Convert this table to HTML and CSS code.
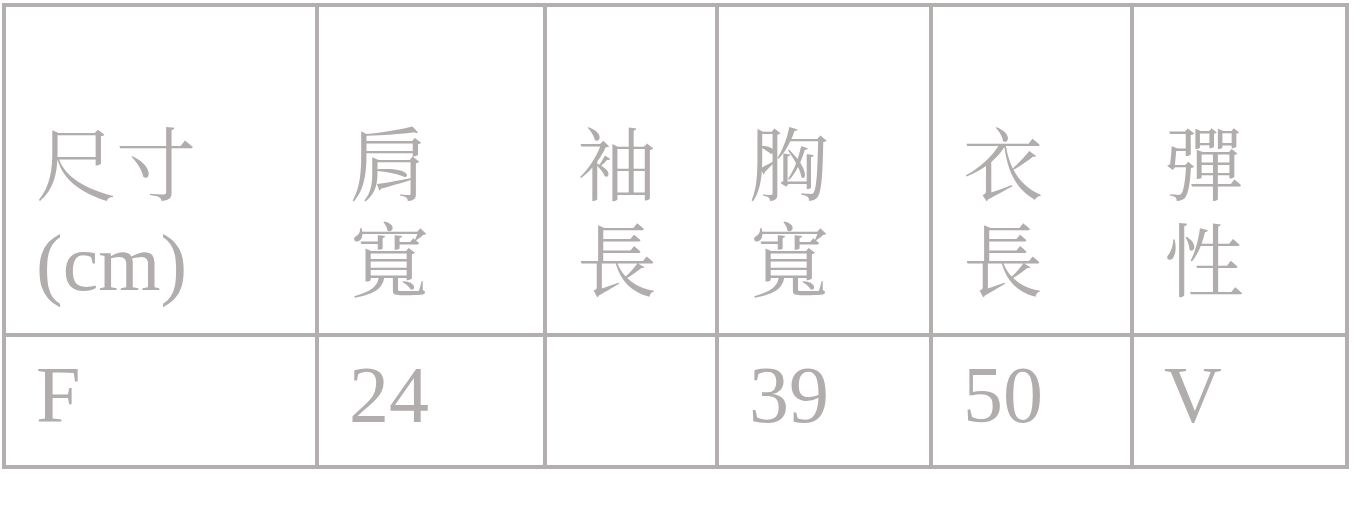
FILE: index.html
```html
<!DOCTYPE html>
<html lang="zh-Hant">
<head>
<meta charset="utf-8">
<title>尺寸表</title>
<link rel="stylesheet" href="styles.css">
</head>
<body>
<table class="size-table">
  <colgroup>
    <col class="c1"><col class="c2"><col class="c3"><col class="c4"><col class="c5"><col class="c6">
  </colgroup>
  <thead>
    <tr class="head-row">
      <th>尺寸<br>(cm)</th>
      <th>肩<br>寬</th>
      <th>袖<br>長</th>
      <th>胸<br>寬</th>
      <th>衣<br>長</th>
      <th>彈<br>性</th>
    </tr>
  </thead>
  <tbody>
    <tr class="data-row">
      <td>F</td>
      <td>24</td>
      <td></td>
      <td>39</td>
      <td>50</td>
      <td>V</td>
    </tr>
  </tbody>
</table>
</body>
</html>
```

FILE: styles.css
```css
html, body {
  margin: 0;
  padding: 0;
  background: #ffffff;
}

body {
  padding: 3px 0 0 2px;
}

.size-table {
  table-layout: fixed;
  border-collapse: separate;
  border-spacing: 4px;
  background: #b3afae;
  width: 1347px;
  font-family: "Liberation Serif", "Noto Serif CJK TC", "Noto Sans CJK TC", serif;
  font-size: 80px;
  color: #b1adac;
}

.c1 { width: 309px; }
.c2 { width: 224px; }
.c3 { width: 168px; }
.c4 { width: 210px; }
.c5 { width: 197px; }
.c6 { width: 211px; }

.size-table th,
.size-table td {
  background: #ffffff;
  padding: 0 0 22px 30px;
  text-align: left;
  vertical-align: bottom;
  font-weight: normal;
  line-height: 96px;
  white-space: nowrap;
}

.head-row th {
  height: 304px;
}

.data-row td {
  height: 106px;
}
```
